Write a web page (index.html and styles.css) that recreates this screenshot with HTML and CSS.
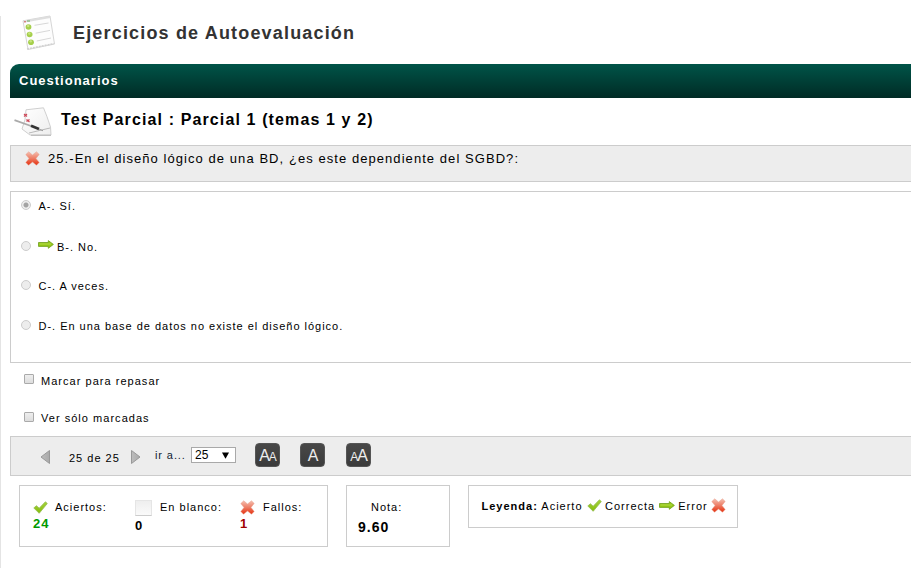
FILE: index.html
```
<!DOCTYPE html>
<html lang="es">
<head>
<meta charset="utf-8">
<title>Ejercicios de Autoevaluación</title>
<link rel="stylesheet" href="styles.css">
</head>
<body>
<svg width="0" height="0" class="defs" aria-hidden="true">
  <defs>
    <linearGradient id="red" x1="0" y1="0" x2="0" y2="1"><stop offset="0" stop-color="#f5bfb0"/><stop offset=".5" stop-color="#ed7c64"/><stop offset="1" stop-color="#e62f0e"/></linearGradient>
    <linearGradient id="green" x1="0" y1="0" x2="0" y2="1"><stop offset="0" stop-color="#a4d13c"/><stop offset="1" stop-color="#86bd0c"/></linearGradient>
    <linearGradient id="paper" x1="0" y1="0" x2="1" y2="1"><stop offset="0" stop-color="#fff"/><stop offset="1" stop-color="#eee"/></linearGradient>
    <linearGradient id="grey" x1="0" y1="0" x2="1" y2="0"><stop offset="0" stop-color="#bdbdbd"/><stop offset="1" stop-color="#aaa"/></linearGradient>
  </defs>
  <symbol id="cross" viewBox="0 0 15 15"><path d="M3.7.8 7.5 4 11.5.8 14.2 3.4 11 7.4 14.2 11.4 11.5 14.2 7.5 11 3.5 14.2.8 11.4 4 7.5.8 3.6Z" fill="url(#red)" stroke="#e9a18f" stroke-width=".5"/></symbol>
  <symbol id="check" viewBox="0 0 15 13"><path d="M.8 7 3.4 4.7 6.2 7.2 12.4.8 14.3 2.5 6.2 12.3Z" fill="url(#green)" stroke="#94bd52" stroke-width=".8"/></symbol>
  <symbol id="arrow" viewBox="0 0 16 9"><path d="M.5 2.5H10.3V.6L15.4 4.4 10.3 8.3V6.4H.5Z" fill="#94c815" stroke="#6f9e1c" stroke-width=".8"/><path d="M1.5 4H13" stroke="#b2da48"/></symbol>
</svg>
<main class="page">
  <header class="head">
    <svg class="head-icon" width="34" height="36" viewBox="0 0 34 36">
      <path d="M1 5.8 28 1 32.5 29 6 34.5Z" fill="#fdfdfd" stroke="#d6d6d6"/>
      <path d="M1 5.8 28 1 28.4 3 1.4 7.8Z" fill="#dedede"/><path d="M2 6.8h2" stroke="#d35b5b"/><path d="M5 6h3" stroke="#6da65f"/>
      <path d="M5 34 32 28.7" stroke="#d1d1d1" stroke-width="1.6" stroke-dasharray="2 1"/>
      <g fill="#a5cf4b"><ellipse cx="6.5" cy="12" rx="2.9" ry="2.8"/><ellipse cx="7.6" cy="19.5" rx="2.9" ry="2.8"/><ellipse cx="9" cy="27.3" rx="2.9" ry="2.8"/></g>
      <g fill="#c8e47f"><circle cx="6.2" cy="11" r="1.2"/><circle cx="7.3" cy="18.5" r="1.2"/><circle cx="8.7" cy="26.3" r="1.2"/></g>
      <path d="M12.5 10.3 26.5 8M13.7 18.2 28 15.4M14.8 26 29 23" stroke="#d8d8d8"/>
    </svg>
    <h1>Ejercicios de Autoevaluación</h1>
  </header>
  <div class="bar">Cuestionarios</div>
  <div class="test">
    <svg width="38" height="30" viewBox="0 0 38 30">
      <path d="M12 2.8 29.5.8Q33 9 36.5 20L37 28H16L8 22Q12 13 12 2.8Z" fill="url(#paper)" stroke="#cfcfcf"/>
      <path d="M15 26 36 21M17 28.3H37" stroke="#aaa" stroke-width=".8"/>
      <path d="m10 7 3 2.5M10 9.5 13 7M12.5 14.5 15.5 12.5M12.5 12.5 15.5 15" stroke="#cc4858" stroke-width="1.2"/>
      <path d="M.5 13.2 17 19" stroke="#aaa" stroke-width="1.8"/><path d="M17 18.7 25 22" stroke="#333" stroke-width="2.6"/><path d="m25 22 4 1.8" stroke="#999"/>
    </svg>
    <h2>Test Parcial : Parcial 1 (temas 1 y 2)</h2>
  </div>
  <section class="question">
    <svg width="15" height="15"><use href="#cross"/></svg>
    <p>25.-En el diseño lógico de una BD, ¿es este dependiente del SGBD?:</p>
  </section>
  <section class="answers">
    <label class="answer"><input type="radio" name="r" checked disabled><span>A-. Sí.</span></label>
    <label class="answer marked"><input type="radio" name="r" disabled><svg width="16" height="9"><use href="#arrow"/></svg><span>B-. No.</span></label>
    <label class="answer"><input type="radio" name="r" disabled><span>C-. A veces.</span></label>
    <label class="answer"><input type="radio" name="r" disabled><span>D-. En una base de datos no existe el diseño lógico.</span></label>
  </section>
  <section class="options">
    <label><input type="checkbox"><span>Marcar para repasar</span></label>
    <label><input type="checkbox"><span>Ver sólo marcadas</span></label>
  </section>
  <nav class="tools">
    <svg class="prev" width="11" height="16" viewBox="0 0 11 16"><path d="M9.5 1.5V14.5L1 8Z" fill="url(#grey)" stroke="#999" stroke-linejoin="round"/></svg>
    <span class="count">25 de 25</span>
    <svg class="next" width="11" height="16" viewBox="0 0 11 16"><path d="M1.5 1.5V14.5L10 8Z" fill="url(#grey)" stroke="#999" stroke-linejoin="round"/></svg>
    <span class="goto">ir a...</span>
    <span class="select"><span>25</span><svg width="7" height="7" viewBox="0 0 7 7"><path d="M0 .5H7L3.5 6.8Z"/></svg></span>
    <button class="size"><span>A</span><small>A</small></button>
    <button class="size"><span>A</span></button>
    <button class="size"><small>A</small><span>A</span></button>
  </nav>
  <footer class="results">
    <div class="box score">
      <div class="stat hits"><div class="line"><svg width="15" height="13"><use href="#check"/></svg><span>Aciertos:</span></div><b>24</b></div>
      <div class="stat blank"><div class="line"><i class="blank-icon"></i><span>En blanco:</span></div><b>0</b></div>
      <div class="stat fails"><div class="line"><svg width="15" height="15"><use href="#cross"/></svg><span>Fallos:</span></div><b>1</b></div>
    </div>
    <div class="box grade"><span>Nota:</span><b>9.60</b></div>
    <div class="box legend"><b>Leyenda:</b><span>Acierto</span><svg class="l-check" width="15" height="13"><use href="#check"/></svg><span>Correcta</span><svg class="l-arrow" width="16" height="9"><use href="#arrow"/></svg><span>Error</span><svg class="l-cross" width="15" height="15"><use href="#cross"/></svg></div>
  </footer>
</main>
</body>
</html>
```
FILE: styles.css
```
* { box-sizing: border-box; margin: 0; padding: 0; }
html, body { width: 100%; height: 568px; overflow: hidden; background: #fff; }
body { font: 11px/14px "Liberation Sans", Arial, sans-serif; letter-spacing: 1px; color: #000; white-space: nowrap; }
svg { display: block; flex: none; }
.defs { position: absolute; }
.page { padding-left: 9px; height: 568px; border-left: 1px solid #e4e4e4; border-image: linear-gradient(to bottom, #fff 17px, #e4e4e4 17px) 1; border-width: 0 0 0 1px; }
.head { height: 64px; display: flex; align-items: flex-start; padding: 15px 0 0 12px; }
.head h1 { font-size: 18px; line-height: 20px; letter-spacing: 1.17px; color: #333; margin: 8px 0 0 17px; }
.bar { height: 34px; border-top-left-radius: 9px; background: linear-gradient(#005448, #002b25); color: #fff; font-weight: bold; font-size: 13px; line-height: 20px; padding: 7px 0 0 9px; letter-spacing: 1px; }
.test { height: 47px; display: flex; align-items: flex-start; padding: 9px 0 0 4px; }
.test h2 { font-size: 16px; line-height: 20px; letter-spacing: 1.12px; margin: 3px 0 0 9px; }
.question { height: 37px; display: flex; align-items: flex-start; background: #ededed; border: 1px solid #ccc; border-right: 0; padding: 5px 0 0 14px; }
.question p { font-size: 13px; line-height: 20px; letter-spacing: 1.06px; margin: -2px 0 0 8px; }
.answers { height: 172px; margin-top: 9px; border: 1px solid #ccc; border-right: 0; padding: 7px 0 0 10px; }
.answer { display: flex; align-items: flex-start; height: 40px; }
.answer span { margin-left: 7.5px; letter-spacing: .98px; }
.answer svg { margin: 0 0 0 7px; }
.marked { padding-top: 1px; height: 40px; }
.answer.marked span { margin-left: 3px; }
input { appearance: none; flex: none; }
input[type=radio] { width: 10px; height: 10px; border: 1px solid #ccc; border-radius: 50%; background: #ededed; margin-top: 1px; }
input[type=radio]:checked { background: radial-gradient(circle, #a3a3a3 0 2px, #eee 3px); }
.options { padding-top: 11px; height: 73px; }
.options label { display: flex; align-items: flex-start; height: 37px; padding: 0 0 0 14px; }
.options input { width: 10px; height: 10px; border: 1px solid #aaa; border-radius: 1px; background: linear-gradient(#eee, #ddd); }
.options label + label input { margin-top: 1px; }
.options span { margin-left: 7px; letter-spacing: 1.03px; }
.tools { height: 40px; display: flex; align-items: flex-start; background: #ededed; border: 1px solid #ccc; border-right: 0; padding-left: 29px; }
.prev, .next { margin-top: 12px; }
.count { margin: 14px 0 0 18px; width: 61px; }
.goto { margin: 11px 0 0 14px; width: 36px; letter-spacing: .9px; color: #123; }
.select { width: 45px; height: 16px; margin-top: 10px; border: 1px solid #a9a9a9; background: #fff; display: flex; justify-content: space-between; align-items: center; padding: 0 6px 0 3px; font-size: 12px; letter-spacing: 0; }
.size { width: 25px; height: 24px; margin: 6px 0 0 19px; border: 1px solid #555; border-radius: 4px; background: linear-gradient(#484848, #3b3b3b); color: #eee; font: 16px/23px "Liberation Sans", sans-serif; display: flex; justify-content: center; align-items: baseline; letter-spacing: -1px; }
.size + .size { margin-left: 20px; }
.size + .size + .size { margin-left: 21px; }
.size small { font-size: 12px; }
.results { display: flex; align-items: flex-start; padding: 9px 0 0 9px; gap: 18px; }
.box { border: 1px solid #ccc; flex: none; }
.score { width: 309px; height: 62px; display: flex; padding: 14px 0 0 13px; }
.stat { width: 102px; flex: none; }
.blank { width: 105px; }
.line { display: flex; height: 15px; align-items: center; }
.line span { margin-left: 8px; margin-top: -1px; }
.hits .line span { margin-left: 7px; }
.stat b { display: block; font-size: 13px; margin-top: 2px; }
.hits b { color: #090; }
.fails b { color: #a00000; }
.blank b { margin-top: 4px; }
.blank-icon { width: 17px; height: 16px; background: linear-gradient(#eee, #fafafa); border: 1px solid #e5e5e5; border-bottom-color: #ccc; }
.grade { width: 104px; height: 62px; padding: 14px 0 0 11px; display: flex; flex-direction: column; }
.grade span { margin-left: 13px; }
.grade b { font-size: 14px; margin-top: 6px; }
.legend { width: 270px; height: 43px; display: flex; align-items: flex-start; padding: 13px 0 0 12.5px; }
.legend span { margin-left: 3.5px; }
.l-check { margin-left: 4px; }
.l-arrow { margin: 2px 0 0 3.5px; }
.l-cross { margin: -1px 0 0 3px; }
```
